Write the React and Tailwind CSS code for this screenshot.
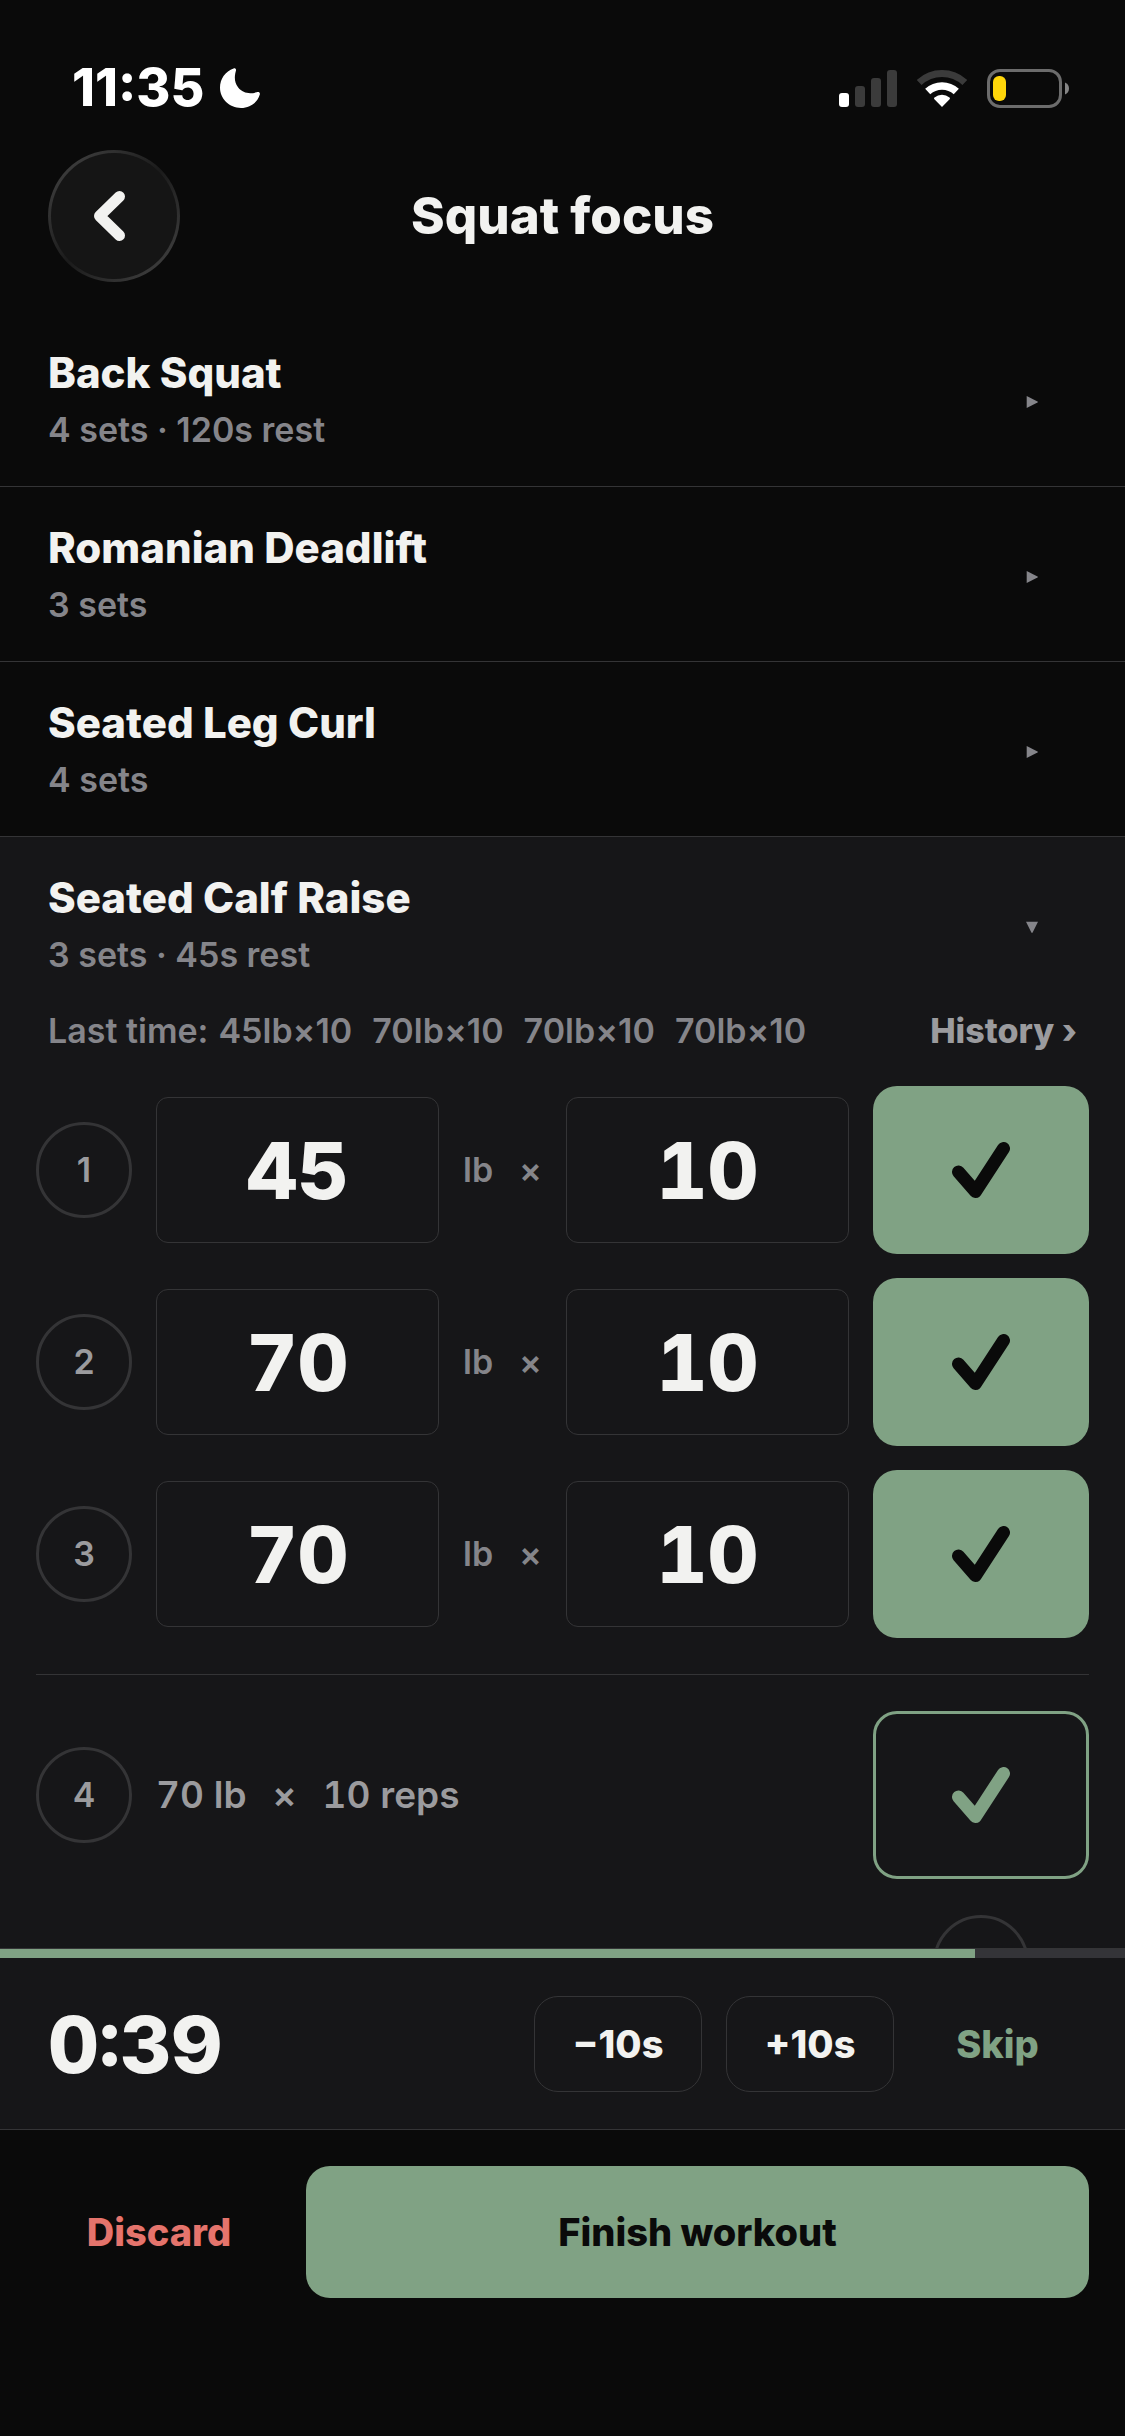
import { useState } from 'react';

const exercises = [
  { id: 1, name: 'Back Squat', detail: '4 sets · 120s rest' },
  { id: 2, name: 'Romanian Deadlift', detail: '3 sets' },
  { id: 3, name: 'Seated Leg Curl', detail: '4 sets' },
];

const lastTime = ['45lb×10', '70lb×10', '70lb×10', '70lb×10'];

const REST_SECONDS = 45;

function StatusBar() {
  return (
    <div className="flex items-center justify-between pt-[59px] pb-[33px] pl-18 pr-14 text-white">
      <div className="flex items-center gap-4">
        <span className="text-[52px] leading-[58px] font-extrabold">11:35</span>
        <svg className="h-10 w-10" viewBox="0 0 40 40" fill="currentColor" aria-hidden="true">
          <path d="M13.600.4C15 0 16.400.9 16 2.400c-1.200 4-2.600 11.200 2.200 17.200 4.800 6 12 6.600 18.400 4.600 2.200-.6 3.700.1 3.200 2.300C37.600 34.400 30 40 21 40 9.400 40 0 31.200 0 19.600 0 10.600 5.400 3.200 13.600.4z" />
        </svg>
      </div>
      <div className="flex items-center">
        <svg className="h-[37px] w-[58px]" viewBox="0 0 58 37" aria-hidden="true">
          <rect x="0" y="23" width="10" height="14" rx="3" fill="#fff" />
          <rect x="16" y="16" width="10" height="21" rx="3" fill="#3b3b3b" />
          <rect x="32" y="8" width="10" height="29" rx="3" fill="#3b3b3b" />
          <rect x="48" y="0" width="10" height="37" rx="3" fill="#3b3b3b" />
        </svg>
        <svg className="ml-5 h-[37px] w-[50px]" viewBox="0 0 50 37" fill="none" aria-hidden="true">
          <path d="M2.200 12.500A33.500 33.500 0 0 1 47.800 12.500" stroke="#3b3b3b" strokeWidth="7" />
          <path d="M10.700 21.600A21 21 0 0 1 39.300 21.600" stroke="#fff" strokeWidth="7.500" />
          <path d="M25 37l-7.600-7.800c-.6-.7-.4-1.300.1-1.700a12 12 0 0 1 15 0c.5.4.7 1 .1 1.700z" fill="#fff" />
        </svg>
        <svg className="ml-5 h-[39px] w-[82px]" viewBox="0 0 82 39" fill="none" aria-hidden="true">
          <rect x="1.500" y="1.500" width="72" height="36" rx="11.500" stroke="#6c6c6c" strokeWidth="3" />
          <rect x="6" y="7" width="13" height="25" rx="6" fill="#ffd60a" />
          <path d="M78 13.500c2.500 1 4 3.300 4 6s-1.500 5-4 6z" fill="#858585" />
        </svg>
      </div>
    </div>
  );
}

function CheckIcon() {
  return (
    <svg className="h-[56px] w-[58px]" viewBox="0 0 58 56" fill="none" stroke="currentColor" strokeWidth="13" strokeLinecap="round" strokeLinejoin="round" aria-hidden="true">
      <path d="M6.500 30L23.500 49.500L51.500 6.500" />
    </svg>
  );
}

function Arrow({ open }) {
  return (
    <span className="flex w-[90px] flex-shrink-0 justify-center pt-[6px] text-[#85858a]">
      <svg className="h-3 w-3" viewBox="0 0 12 12" fill="currentColor" aria-hidden="true">
        {open ? <path d="M0 .7h12L6.600 11.500q-.6.900-1.200 0z" /> : <path d="M.7 0v12L11.500 6.600q.9-.6 0-1.200z" />}
      </svg>
    </span>
  );
}

function ExerciseHeader({ name, detail, open }) {
  return (
    <button type="button" aria-expanded={open} className="flex w-full items-center justify-between py-9 px-12 text-left">
      <span className="flex flex-col gap-3">
        <span className="text-[42px] leading-[50px] font-extrabold text-[#f2f2f0]">{name}</span>
        <span className="text-[34px] leading-[40px] font-semibold text-[#85858a]">{detail}</span>
      </span>
      <Arrow open={open} />
    </button>
  );
}

function SetNumber({ children }) {
  return (
    <span className="flex h-24 w-24 flex-shrink-0 items-center justify-center rounded-full border-3 border-[#343436] text-[34px] leading-[40px] font-semibold text-[#9b9b9e]">
      {children}
    </span>
  );
}

function SetRow({ set, onChange, onToggle }) {
  const field = 'h-[146px] w-0 min-w-0 flex-1 rounded-xl border border-[#343436] bg-transparent text-center text-[79px] font-extrabold tabular-nums text-[#f2f2f0]';

  return (
    <div className="flex items-center gap-6">
      <SetNumber>{set.id}</SetNumber>
      <input
        aria-label={`Set ${set.id} weight`}
        inputMode="numeric"
        className={field}
        value={set.weight}
        onChange={e => onChange(set.id, 'weight', e.target.value)}
      />
      <span className="flex w-[79px] flex-shrink-0 items-center justify-between text-[34px] leading-[40px] font-semibold text-[#85858a]">
        <span>lb</span>
        <span>×</span>
      </span>
      <input
        aria-label={`Set ${set.id} reps`}
        inputMode="numeric"
        className={field}
        value={set.reps}
        onChange={e => onChange(set.id, 'reps', e.target.value)}
      />
      <button
        type="button"
        aria-label={`Set ${set.id} done`}
        aria-pressed={set.done}
        onClick={() => onToggle(set.id)}
        className={`flex h-42 w-54 flex-shrink-0 items-center justify-center rounded-3xl ${set.done ? 'bg-[#80a284] text-[#0a0a0a]' : 'border-3 border-[#80a284] text-[#80a284]'}`}
      >
        <CheckIcon />
      </button>
    </div>
  );
}

export default function App() {
  const [sets, setSets] = useState([
    { id: 1, weight: '45', reps: '10', done: true },
    { id: 2, weight: '70', reps: '10', done: true },
    { id: 3, weight: '70', reps: '10', done: true },
  ]);
  const [left, setLeft] = useState(39);

  const changeSet = (id, key, value) => {
    setSets(prev => prev.map(s => s.id === id ? { ...s, [key]: value } : s));
  };

  const toggleSet = id => {
    setSets(prev => prev.map(s => s.id === id ? { ...s, done: !s.done } : s));
  };

  const progress = Math.min((left / REST_SECONDS) * 100, 100);
  const clock = `${Math.floor(left / 60)}:${String(left % 60).padStart(2, '0')}`;

  return (
    <div className="flex h-screen flex-col bg-[#0a0a0a] font-['Inter',sans-serif] text-[#f2f2f0]">
      <StatusBar />

      <header className="grid grid-cols-[132px_1fr_132px] items-center px-12 pb-[30px]">
        {/* Rim catches light at top left and bottom right */}
        <button type="button" aria-label="Back" className="h-33 w-33 rounded-full bg-linear-to-br from-[#484848] via-[#1b1b1b] to-[#484848] p-[3px]">
          <span className="flex h-full w-full items-center justify-center rounded-full bg-[#151515]">
            <svg className="mr-[10px] h-[50px] w-[31px]" viewBox="0 0 31 50" fill="none" stroke="currentColor" strokeWidth="11" strokeLinecap="round" strokeLinejoin="round" aria-hidden="true">
              <path d="M25.500 5.500L5.500 25L25.500 44.500" />
            </svg>
          </span>
        </button>
        <h1 className="text-center text-[51px] leading-[60px] font-extrabold">Squat focus</h1>
      </header>

      <main className="min-h-0 flex-1 overflow-hidden">
        {exercises.map(exercise => (
          <div key={exercise.id} className="border-b border-[#343436]">
            <ExerciseHeader name={exercise.name} detail={exercise.detail} open={false} />
          </div>
        ))}

        <section className="min-h-full bg-[#161618]">
          <ExerciseHeader name="Seated Calf Raise" detail="3 sets · 45s rest" open />

          <div className="flex items-center justify-between px-12 pb-[35px] text-[34px] leading-[40px]">
            <p className="flex font-semibold text-[#85858a]">
              <span className="mr-[10px]">Last time:</span>
              <span className="flex gap-5">
                {lastTime.map((entry, i) => (
                  <span key={i}>{entry}</span>
                ))}
              </span>
            </p>
            <a href="#history" className="font-extrabold text-[#9b9b9e]">History ›</a>
          </div>

          <div className="px-9">
            <div className="flex flex-col gap-6 border-b border-[#343436] pb-9">
              {sets.map(set => (
                <SetRow key={set.id} set={set} onChange={changeSet} onToggle={toggleSet} />
              ))}
            </div>

            <div className="flex items-center gap-6 pt-9">
              <SetNumber>4</SetNumber>
              <p className="flex flex-1 gap-[26px] text-[37px] font-semibold tabular-nums text-[#9b9b9e]">
                <span>70 lb</span>
                <span>×</span>
                <span>10 reps</span>
              </p>
              <button type="button" aria-label="Set 4 done" className="flex h-42 w-54 items-center justify-center rounded-3xl border-3 border-[#80a284] text-[#80a284]">
                <CheckIcon />
              </button>
            </div>

            <div className="flex justify-end pt-9">
              <div className="flex w-54 justify-center">
                <button type="button" aria-label="Remove set" className="h-24 w-24 rounded-full border-3 border-[#343436]"></button>
              </div>
            </div>
          </div>
        </section>
      </main>

      <div className="border-y border-[#343436] bg-[#161618]">
        <div className="h-[9px] w-full bg-[#343438]">
          <div style={{ width: `${progress}%` }} className="h-full bg-[#80a284]"></div>
        </div>
        <div className="flex items-center justify-between px-12 pt-[38px] pb-[37px]">
          <span className="text-[79px] leading-[96px] font-extrabold tabular-nums">{clock}</span>
          <div className="flex gap-6 text-[38px] font-extrabold">
            <button type="button" onClick={() => setLeft(v => Math.max(v - 10, 0))} className="h-24 w-42 rounded-3xl border border-[#343436]">
              −10s
            </button>
            <button type="button" onClick={() => setLeft(v => v + 10)} className="h-24 w-42 rounded-3xl border border-[#343436]">
              +10s
            </button>
            <button type="button" onClick={() => setLeft(0)} className="h-24 w-[159px] text-[#80a284]">
              Skip
            </button>
          </div>
        </div>
      </div>

      <footer className="flex gap-6 px-9 pt-9 pb-[138px] text-[38px] font-extrabold">
        <button type="button" className="w-[246px] text-[#e5746c]">Discard</button>
        <button type="button" className="h-33 flex-1 rounded-3xl bg-[#80a284] text-[#0a0a0a]">Finish workout</button>
      </footer>
    </div>
  );
}
